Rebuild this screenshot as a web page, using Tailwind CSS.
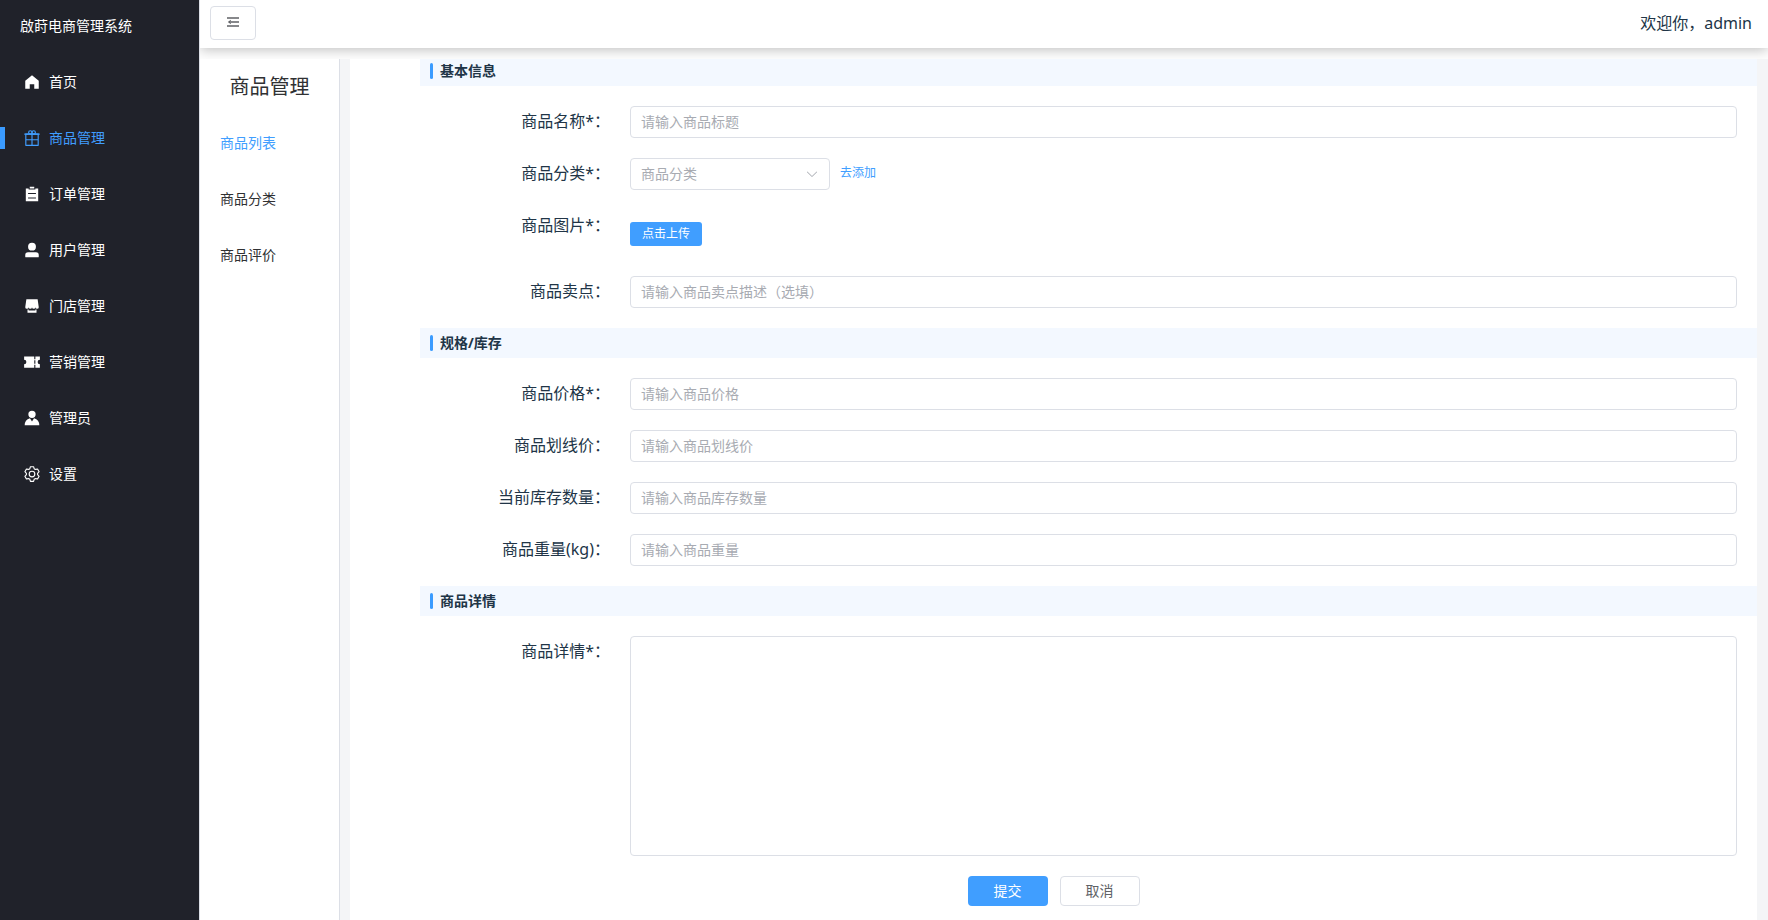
<!DOCTYPE html>
<html lang="zh-CN">
<head>
<meta charset="utf-8">
<title>啟莳电商管理系统</title>
<script src="https://cdn.jsdelivr.net/npm/@tailwindcss/browser@4"></script>
</head>
<body class="flex h-screen overflow-hidden bg-white font-['Noto_Sans','Noto_Sans_CJK_SC',sans-serif] text-[#213547]">

<aside class="flex w-[200px] shrink-0 flex-col border-r border-[#dcdfe6] bg-[#20222a] text-sm text-white">
  <h1 class="flex h-[52px] items-center pl-5">啟莳电商管理系统</h1>
  <nav class="flex flex-col pt-[2px]">
    <a href="#" class="flex h-14 items-center gap-2 pl-[23px]">
      <svg class="size-[18px]" viewBox="0 0 1024 1024" fill="currentColor"><path d="M512 128 128 447.936V896h255.936V640H640v256h255.936V447.936z"/></svg>首页</a>
    <a href="#" class="flex h-14 items-center gap-[18px] text-[#409eff]">
      <span class="h-[22px] w-[5px] bg-[#3a9bff]"></span>
      <span class="flex items-center gap-2">
      <svg class="size-[18px]" viewBox="0 0 1024 1024" fill="currentColor"><path d="M480 896V640H192v-64h288V320H192v576h288zm64 0h288V320H544v256h288v64H544v256zM128 256h768v672a32 32 0 0 1-32 32H160a32 32 0 0 1-32-32V256z"/><path d="M96 256h832q32 0 32 32t-32 32H96q-32 0-32-32t32-32z"/><path d="M416 256a64 64 0 1 0 0-128 64 64 0 0 0 0 128zm0 64a128 128 0 1 1 0-256 128 128 0 0 1 0 256z"/><path d="M608 256a64 64 0 1 0 0-128 64 64 0 0 0 0 128zm0 64a128 128 0 1 1 0-256 128 128 0 0 1 0 256z"/></svg>商品管理</span></a>
    <a href="#" class="flex h-14 items-center gap-2 pl-[23px]">
      <svg class="size-[18px]" viewBox="0 0 1024 1024" fill="currentColor"><path d="M704 192h160v736H160V192h160v64h384v-64zM288 512h448v-64H288v64zm0 256h448v-64H288v64zm96-576V96h256v96H384z"/></svg>订单管理</a>
    <a href="#" class="flex h-14 items-center gap-2 pl-[23px]">
      <svg class="size-[18px]" viewBox="0 0 1024 1024" fill="currentColor"><path d="M288 320a224 224 0 1 0 448 0 224 224 0 1 0-448 0zm544 608H160a32 32 0 0 1-32-32v-96a160 160 0 0 1 160-160h448a160 160 0 0 1 160 160v96a32 32 0 0 1-32 32z"/></svg>用户管理</a>
    <a href="#" class="flex h-14 items-center gap-2 pl-[23px]">
      <svg class="size-[18px]" viewBox="0 0 1024 1024" fill="currentColor"><path d="M704 704h64v192H256V704h64v64h384v-64zm188.544-152.192C894.528 559.616 896 567.616 896 576a96 96 0 1 1-192 0 96 96 0 1 1-192 0 96 96 0 1 1-192 0 96 96 0 1 1-192 0c0-8.384 1.408-16.384 3.392-24.192L192 128h640l60.544 423.808z"/></svg>门店管理</a>
    <a href="#" class="flex h-14 items-center gap-2 pl-[23px]">
      <svg class="size-[18px]" viewBox="0 0 1024 1024" fill="currentColor"><path d="M640 832H64V640a128 128 0 1 0 0-256V192h576v160h64V192h256v192a128 128 0 1 0 0 256v192H704V672h-64v160zm0-416v192h64V416h-64z"/></svg>营销管理</a>
    <a href="#" class="flex h-14 items-center gap-2 pl-[23px]">
      <svg class="size-[18px]" viewBox="0 0 1024 1024" fill="currentColor"><path d="M628.736 528.896A416 416 0 0 1 928 928H96a415.872 415.872 0 0 1 299.264-399.104L512 704l116.736-175.104zM720 304a208 208 0 1 1-416 0 208 208 0 0 1 416 0z"/></svg>管理员</a>
    <a href="#" class="flex h-14 items-center gap-2 pl-[23px]">
      <svg class="size-[18px]" viewBox="0 0 1024 1024" fill="currentColor"><path d="M600.704 64a32 32 0 0 1 30.464 22.208l35.2 109.376c14.784 7.232 28.928 15.36 42.432 24.512l112.384-24.192a32 32 0 0 1 34.432 15.36L944.32 364.8a32 32 0 0 1-4.032 37.504l-77.12 85.12a357.12 357.12 0 0 1 0 49.024l77.12 85.248a32 32 0 0 1 4.032 37.504l-88.704 153.6a32 32 0 0 1-34.432 15.296L708.8 803.904c-13.44 9.088-27.648 17.28-42.368 24.512l-35.264 109.376A32 32 0 0 1 600.704 960H423.296a32 32 0 0 1-30.464-22.208L357.696 828.48a351.616 351.616 0 0 1-42.56-24.64l-112.32 24.256a32 32 0 0 1-34.432-15.36L79.68 659.2a32 32 0 0 1 4.032-37.504l77.12-85.248a357.12 357.12 0 0 1 0-48.896l-77.12-85.248A32 32 0 0 1 79.68 364.8l88.704-153.6a32 32 0 0 1 34.432-15.296l112.32 24.256c13.568-9.152 27.776-17.408 42.56-24.64l35.2-109.312A32 32 0 0 1 423.232 64H600.64zm-23.424 64H446.72l-36.352 113.088-24.512 11.968a294.113 294.113 0 0 0-34.816 20.096l-22.656 15.36-116.224-25.088-65.28 113.152 79.68 88.192-1.92 27.136a293.12 293.12 0 0 0 0 40.192l1.92 27.136-79.808 88.192 65.344 113.152 116.224-25.024 22.656 15.296a294.113 294.113 0 0 0 34.816 20.096l24.512 11.968L446.72 896h130.688l36.48-113.152 24.448-11.904a288.282 288.282 0 0 0 34.752-20.096l22.592-15.296 116.288 25.024 65.28-113.152-79.744-88.192 1.92-27.136a293.12 293.12 0 0 0 0-40.256l-1.92-27.136 79.808-88.128-65.344-113.152-116.288 24.960-22.592-15.232a287.616 287.616 0 0 0-34.752-20.096l-24.448-11.904L577.344 128zM512 320a192 192 0 1 1 0 384 192 192 0 0 1 0-384zm0 64a128 128 0 1 0 0 256 128 128 0 0 0 0-256z"/></svg>设置</a>
  </nav>
</aside>

<div class="flex min-w-0 flex-1 flex-col">
  <div class="shrink-0 overflow-hidden pb-[11px]">
    <header class="flex h-12 items-center justify-between pr-4 pb-[2px] pl-[10px] shadow-[0_2px_12px_rgba(0,0,0,0.25)]">
      <button type="button" aria-label="折叠菜单" class="flex h-[34px] w-[46px] items-center justify-center rounded border border-[#dcdfe6] pb-[2px] text-[#606266]">
        <svg class="h-[10px] w-3" viewBox="0 0 12 10" fill="currentColor"><path d="M0 .2h12v1.500H0zM4 4.200h8v1.500H4zM0 8.300h12v1.500H0zM.8 5l3-2.200v4.400z"/></svg>
      </button>
      <p>欢迎你，admin</p>
    </header>
  </div>

  <div class="flex min-h-0 flex-1 gap-[10px] bg-[#f4f5f7] pr-[11px]">
    <nav class="w-[140px] shrink-0 border-r border-[#dcdfe6] bg-white text-sm text-[#303133]">
      <h2 class="flex h-14 items-center justify-center text-xl">商品管理</h2>
      <a href="#" class="flex h-14 items-center pl-5 text-[#409eff]">商品列表</a>
      <a href="#" class="flex h-14 items-center pl-5">商品分类</a>
      <a href="#" class="flex h-14 items-center pl-5">商品评价</a>
    </nav>

    <main class="min-w-0 flex-1 overflow-hidden bg-white">
      <form class="-mt-[3px] flex flex-col gap-5">
        <h3 class="ml-[70px] flex h-[30px] items-center gap-[7px] bg-[#f3f8ff] pl-[10px] text-sm font-bold"><span class="h-4 w-[3px] rounded-sm bg-[#3a9bff]"></span>基本信息</h3>
        <div class="flex gap-5 pr-5">
          <label for="name" class="w-[260px] shrink-0 text-right leading-[30px]">商品名称*：</label>
          <input id="name" type="text" placeholder="请输入商品标题" class="h-8 min-w-0 flex-1 rounded border border-[#dcdfe6] px-[10px] pb-[2px] text-sm placeholder:text-[#a8abb2]">
        </div>
        <div class="flex gap-5 pr-5">
          <label for="category" class="w-[260px] shrink-0 text-right leading-[30px]">商品分类*：</label>
          <div class="flex gap-[10px]">
            <div class="relative">
              <select id="category" class="h-8 w-[200px] appearance-none rounded border border-[#dcdfe6] bg-white px-[10px] text-sm text-[#a8abb2]"><option>商品分类</option></select>
              <svg class="pointer-events-none absolute top-[9px] right-[11px] size-[14px] text-[#a8abb2]" viewBox="0 0 1024 1024" fill="currentColor"><path d="M831.872 340.864 512 652.672 192.128 340.864a30.592 30.592 0 0 0-42.752 0 29.120 29.120 0 0 0 0 41.600L489.664 714.240a32 32 0 0 0 44.672 0l340.288-331.712a29.120 29.120 0 0 0 0-41.728 30.592 30.592 0 0 0-42.752 0z"/></svg>
            </div>
            <a href="#" class="text-xs leading-[30px] text-[#409eff]">去添加</a>
          </div>
        </div>
        <div class="flex gap-5 pr-5">
          <span class="w-[260px] shrink-0 text-right leading-[30px]">商品图片*：</span>
          <div class="pt-3 pb-[10px]">
            <button type="button" class="block h-6 w-[72px] rounded-[3px] bg-[#409eff] text-xs text-white">点击上传</button>
          </div>
        </div>
        <div class="flex gap-5 pr-5">
          <label for="point" class="w-[260px] shrink-0 text-right leading-[30px]">商品卖点：</label>
          <input id="point" type="text" placeholder="请输入商品卖点描述（选填）" class="h-8 min-w-0 flex-1 rounded border border-[#dcdfe6] px-[10px] pb-[2px] text-sm placeholder:text-[#a8abb2]">
        </div>

        <h3 class="ml-[70px] flex h-[30px] items-center gap-[7px] bg-[#f3f8ff] pl-[10px] text-sm font-bold"><span class="h-4 w-[3px] rounded-sm bg-[#3a9bff]"></span>规格/库存</h3>
        <div class="flex gap-5 pr-5">
          <label for="price" class="w-[260px] shrink-0 text-right leading-[30px]">商品价格*：</label>
          <input id="price" type="text" placeholder="请输入商品价格" class="h-8 min-w-0 flex-1 rounded border border-[#dcdfe6] px-[10px] pb-[2px] text-sm placeholder:text-[#a8abb2]">
        </div>
        <div class="flex gap-5 pr-5">
          <label for="line-price" class="w-[260px] shrink-0 text-right leading-[30px]">商品划线价：</label>
          <input id="line-price" type="text" placeholder="请输入商品划线价" class="h-8 min-w-0 flex-1 rounded border border-[#dcdfe6] px-[10px] pb-[2px] text-sm placeholder:text-[#a8abb2]">
        </div>
        <div class="flex gap-5 pr-5">
          <label for="stock" class="w-[260px] shrink-0 text-right leading-[30px]">当前库存数量：</label>
          <input id="stock" type="text" placeholder="请输入商品库存数量" class="h-8 min-w-0 flex-1 rounded border border-[#dcdfe6] px-[10px] pb-[2px] text-sm placeholder:text-[#a8abb2]">
        </div>
        <div class="flex gap-5 pr-5">
          <label for="weight" class="w-[260px] shrink-0 text-right leading-[30px]">商品重量(kg)：</label>
          <input id="weight" type="text" placeholder="请输入商品重量" class="h-8 min-w-0 flex-1 rounded border border-[#dcdfe6] px-[10px] pb-[2px] text-sm placeholder:text-[#a8abb2]">
        </div>

        <h3 class="ml-[70px] flex h-[30px] items-center gap-[7px] bg-[#f3f8ff] pl-[10px] text-sm font-bold"><span class="h-4 w-[3px] rounded-sm bg-[#3a9bff]"></span>商品详情</h3>
        <div class="flex gap-5 pr-5">
          <label for="detail" class="w-[260px] shrink-0 text-right leading-[30px]">商品详情*：</label>
          <textarea id="detail" class="h-[220px] min-w-0 flex-1 resize-none rounded border border-[#dcdfe6] px-[10px] py-1 text-sm"></textarea>
        </div>
        <div class="flex justify-center gap-3 text-sm">
          <button type="submit" class="h-[30px] w-20 rounded bg-[#409eff] text-white">提交</button>
          <button type="button" class="h-[30px] w-20 rounded border border-[#dcdfe6] text-[#606266]">取消</button>
        </div>
      </form>
    </main>
  </div>
</div>
</body>
</html>
